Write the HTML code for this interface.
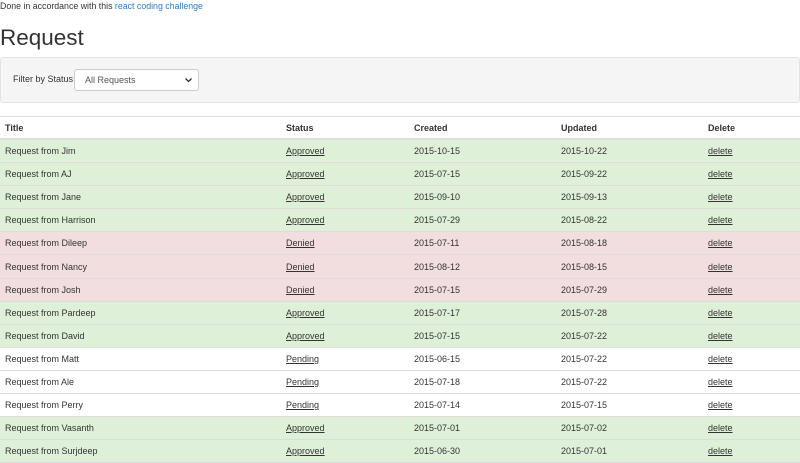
<!DOCTYPE html>
<html><head><style>
body{margin:0;width:800px;height:450px;overflow:hidden;font-family:"Liberation Sans",sans-serif;color:#333;font-size:9px;background:#fff}
.top{position:absolute;left:0;top:0;font-size:8.8px;line-height:12px}
.top a{color:#337ab7;text-decoration:none}
h1{position:absolute;left:0;top:23px;margin:0;font-size:22.5px;font-weight:400;line-height:30px}
.well{position:absolute;left:0;top:57px;width:798px;height:44px;background:#f5f5f5;border:1px solid #e3e3e3;border-radius:3px}
.well .lbl{position:absolute;left:12px;top:16px}
.sel{position:absolute;left:73px;top:11px;width:125px;height:22px;background:#fff;border:1px solid #ccc;border-radius:3px;box-sizing:border-box}
.sel span{position:absolute;left:10px;top:5px;color:#555}
.sel svg{position:absolute;right:6px;top:8px}
table{position:absolute;left:0;top:116px;width:800px;border-collapse:collapse;border-top:1px solid #ddd}
td,th{height:22.1px;padding:0 5px;text-align:left;border-bottom:1px solid #ddd;vertical-align:middle}
th{font-weight:bold;border-bottom:2px solid #ddd;height:21px}
tr.s td{background:#dff0d8}
tr.d td{background:#f2dede}
td u{color:#333}
</style></head><body>
<div class="top">Done in accordance with this <a>react coding challenge</a></div>
<h1>Request</h1>
<div class="well"><span class="lbl">Filter by Status:</span><div class="sel"><span>All Requests</span><svg width="7" height="5" viewBox="0 0 7 5"><path d="M0.5 0.5L3.5 3.5L6.5 0.5" stroke="#333" stroke-width="1.3" fill="none"/></svg></div></div>
<table>
<colgroup><col style="width:281px"><col style="width:128px"><col style="width:147px"><col style="width:147px"><col></colgroup>
<tr><th>Title</th><th>Status</th><th>Created</th><th>Updated</th><th>Delete</th></tr>
<tr class="s"><td>Request from Jim</td><td><u>Approved</u></td><td>2015-10-15</td><td>2015-10-22</td><td><u>delete</u></td></tr>
<tr class="s"><td>Request from AJ</td><td><u>Approved</u></td><td>2015-07-15</td><td>2015-09-22</td><td><u>delete</u></td></tr>
<tr class="s"><td>Request from Jane</td><td><u>Approved</u></td><td>2015-09-10</td><td>2015-09-13</td><td><u>delete</u></td></tr>
<tr class="s"><td>Request from Harrison</td><td><u>Approved</u></td><td>2015-07-29</td><td>2015-08-22</td><td><u>delete</u></td></tr>
<tr class="d"><td>Request from Dileep</td><td><u>Denied</u></td><td>2015-07-11</td><td>2015-08-18</td><td><u>delete</u></td></tr>
<tr class="d"><td>Request from Nancy</td><td><u>Denied</u></td><td>2015-08-12</td><td>2015-08-15</td><td><u>delete</u></td></tr>
<tr class="d"><td>Request from Josh</td><td><u>Denied</u></td><td>2015-07-15</td><td>2015-07-29</td><td><u>delete</u></td></tr>
<tr class="s"><td>Request from Pardeep</td><td><u>Approved</u></td><td>2015-07-17</td><td>2015-07-28</td><td><u>delete</u></td></tr>
<tr class="s"><td>Request from David</td><td><u>Approved</u></td><td>2015-07-15</td><td>2015-07-22</td><td><u>delete</u></td></tr>
<tr><td>Request from Matt</td><td><u>Pending</u></td><td>2015-06-15</td><td>2015-07-22</td><td><u>delete</u></td></tr>
<tr><td>Request from Ale</td><td><u>Pending</u></td><td>2015-07-18</td><td>2015-07-22</td><td><u>delete</u></td></tr>
<tr><td>Request from Perry</td><td><u>Pending</u></td><td>2015-07-14</td><td>2015-07-15</td><td><u>delete</u></td></tr>
<tr class="s"><td>Request from Vasanth</td><td><u>Approved</u></td><td>2015-07-01</td><td>2015-07-02</td><td><u>delete</u></td></tr>
<tr class="s"><td>Request from Surjdeep</td><td><u>Approved</u></td><td>2015-06-30</td><td>2015-07-01</td><td><u>delete</u></td></tr>
</table>
</body></html>
